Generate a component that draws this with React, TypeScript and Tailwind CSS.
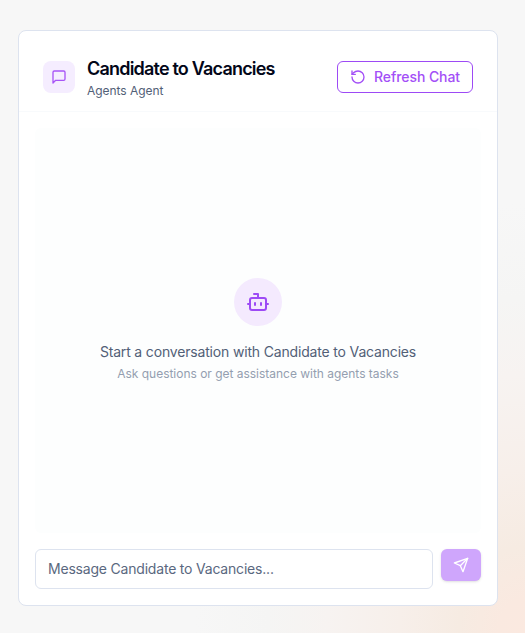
import { Bot, RotateCcw } from "lucide-react";

const agent = { name: "Candidate to Vacancies", type: "Agents" };

function MessageIcon() {
  return (
    <svg viewBox="0 0 24 24" fill="none" stroke="currentColor" strokeWidth="2" strokeLinecap="round" strokeLinejoin="round" className="h-4 w-4">
      <path d="M21 15a2 2 0 0 1-2 2H7l-4 4V5a2 2 0 0 1 2-2h14a2 2 0 0 1 2 2z" />
    </svg>
  );
}

function SendIcon() {
  return (
    <svg viewBox="0 0 24 24" fill="none" stroke="currentColor" strokeWidth="2" strokeLinecap="round" strokeLinejoin="round" className="h-4 w-4">
      <path d="m22 2-7 20-4-9-9-4Z" />
      <path d="M22 2 11 13" />
    </svg>
  );
}

export default function App() {
  return (
    <div className="h-screen overflow-hidden bg-[#f7f7f7] bg-[radial-gradient(ellipse_330px_430px_at_525px_633px,#fbe9e0_0%,#fae9e0_8%,#f6ebe2_20%,#f7efea_38%,#f7f3f1_60%,#f5f5f4_78%,#f7f7f7_100%)] pl-[18px] pt-[30px] font-['Inter',sans-serif]">
      <div className="flex h-[576px] w-[480px] flex-col rounded-lg border border-[#dde3ef] bg-white">
        <div className="flex items-center justify-between border-b border-slate-50 px-6 pb-3 pt-6">
          <div className="flex items-center gap-3">
            <div className="flex h-8 w-8 items-center justify-center rounded-lg bg-[#f5edff] text-[#a855f7]">
              <MessageIcon />
            </div>
            <div>
              <h3 className="text-lg font-semibold leading-7 tracking-[-0.8px] text-slate-950">{agent.name}</h3>
              <p className="text-xs tracking-[-0.05px] text-[#526077]">{agent.type} Agent</p>
            </div>
          </div>
          <button className="flex h-8 items-center gap-2 rounded-md border border-[#9d4af5] px-3 text-sm font-medium tracking-[-0.08px] text-[#a34ff7]">
            <RotateCcw size={16} />
            Refresh Chat
          </button>
        </div>

        <div className="flex flex-1 flex-col gap-4 p-4">
          {/* Empty state */}
          <div className="flex flex-1 flex-col items-center justify-center rounded-md bg-[#fdfefe] pb-0.5 text-center">
            <div className="mb-4 flex h-12 w-12 items-center justify-center rounded-full bg-[#f4eafe]">
              <Bot size={24} className="text-[#9d4af5]" />
            </div>
            <p className="text-sm tracking-[-0.17px] text-[#526077]">Start a conversation with {agent.name}</p>
            <p className="mt-1 text-xs tracking-[-0.02px] text-[#949eb0]">
              Ask questions or get assistance with {agent.type.toLowerCase()} tasks
            </p>
          </div>

          <div className="flex items-start gap-2">
            <input
              className="h-10 min-w-0 flex-1 rounded-md border border-[#dde3ef] bg-white px-3 pb-0.5 text-sm tracking-[-0.2px] placeholder:text-[#5a6880]"
              placeholder={`Message ${agent.name}...`}
            />
            <button className="flex h-8 w-10 items-center justify-center rounded-md bg-[#cfa6fc] text-white shadow-sm">
              <SendIcon />
            </button>
          </div>
        </div>
      </div>
    </div>
  );
}
